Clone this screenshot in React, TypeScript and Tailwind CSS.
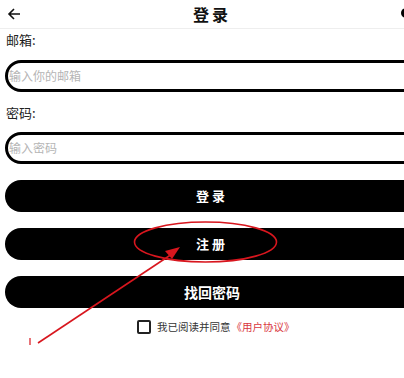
import React from "react";

export default function App() {
  return (
    <div
      className="relative w-[404px] h-[378px] overflow-hidden bg-white"
      style={{ fontFamily: '"Noto Sans CJK SC", "Noto Sans", sans-serif' }}
    >
      <div className="w-[424px]">
        {/* Header */}
        <div className="relative flex h-[29px] items-center justify-center border-b border-[#eeeeee]">
          <svg className="absolute left-[7px] top-[7px]" width="14" height="14" viewBox="0 0 14 14">
            <path d="M13 7H2M7 2L2 7l5 5" fill="none" stroke="#111" strokeWidth="1.6" />
          </svg>
          <span className="text-[16px] font-bold tracking-[3px] text-[#111] leading-none">登录</span>
          <div className="absolute left-[401px] top-[8px] h-[10px] w-[10px] rounded-full bg-black" />
        </div>

        <div className="px-[5px]">
          <div className="pt-[2px] pl-[1px] text-[13px] leading-[18px] text-[#222]">邮箱:</div>
          <div className="mt-[11px] flex h-[32px] items-center rounded-full border-[3px] border-black pl-[1px]">
            <span className="text-[12px] text-[#b5b5b5]">输入你的邮箱</span>
          </div>
          <div className="mt-[12px] pl-[1px] text-[13px] leading-[18px] text-[#222]">密码:</div>
          <div className="mt-[10px] flex h-[32px] items-center rounded-full border-[3px] border-black pl-[1px]">
            <span className="text-[12px] text-[#b5b5b5]">输入密码</span>
          </div>

          <div className="mt-[16px] flex flex-col gap-[16px]">
            <div className="flex h-[32px] items-center justify-center rounded-full bg-black text-[13px] font-bold tracking-[3px] text-white">
              登录
            </div>
            <div className="flex h-[32px] items-center justify-center rounded-full bg-black text-[13px] font-bold tracking-[3px] text-white">
              注册
            </div>
            <div className="flex h-[32px] items-center justify-center rounded-full bg-black text-[14px] font-bold text-white">
              找回密码
            </div>
          </div>

          <div className="mt-[11px] flex items-center pl-[132px]">
            <div className="h-[14px] w-[14px] rounded-[2px] border-[2px] border-[#222]" />
            <span className="ml-[6px] text-[10.5px] text-[#333]">我已阅读并同意</span>
            <span className="ml-[1px] text-[10.5px] text-[#d9363e]">《用户协议》</span>
          </div>
        </div>
      </div>

      {/* annotation overlay */}
      <svg className="pointer-events-none absolute left-0 top-0" width="404" height="378" viewBox="0 0 404 378">
        <ellipse cx="205.5" cy="242" rx="71" ry="20" fill="none" stroke="#d8161e" strokeWidth="1.6" />
        <line x1="38" y1="343" x2="172" y2="254" stroke="#d8161e" strokeWidth="1.6" />
        <polygon points="180,247 165,251 172,259" fill="#d8161e" />
        <line x1="30" y1="338" x2="30" y2="345" stroke="#d8161e" strokeWidth="1.2" />
      </svg>
    </div>
  );
}
